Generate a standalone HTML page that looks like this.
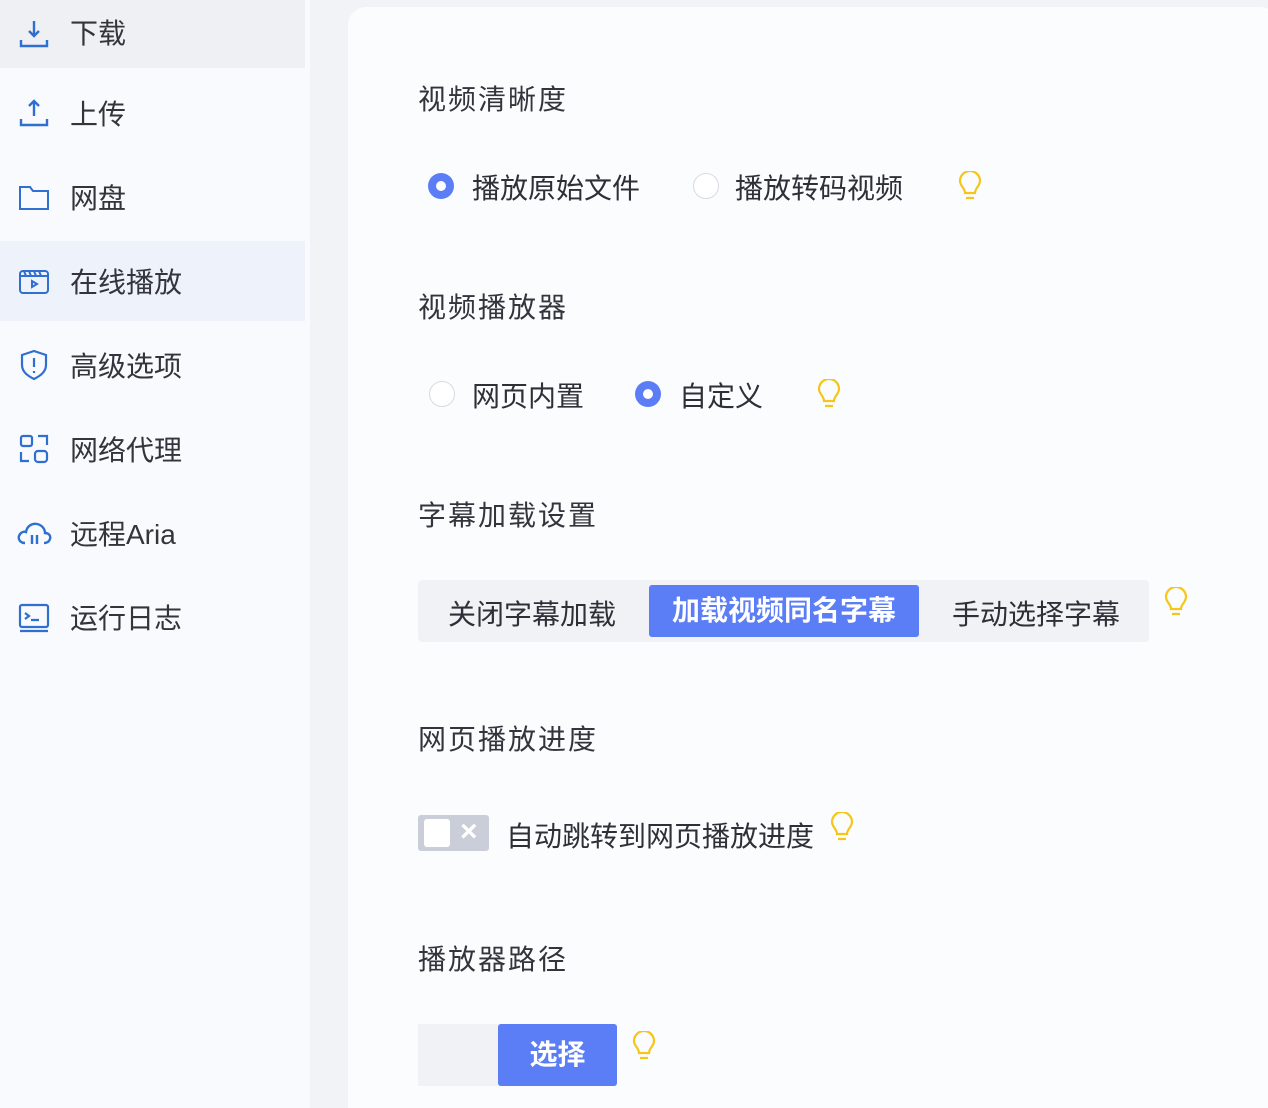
<!DOCTYPE html>
<html><head><meta charset="utf-8"><style>
*{margin:0;padding:0;box-sizing:border-box}
html,body{width:1268px;height:1108px;overflow:hidden}
body{background:#f1f3f7;font-family:"Liberation Sans","Noto Sans CJK SC",sans-serif;color:#2e3038;position:relative}
.side{position:absolute;left:0;top:0;width:310px;height:1108px;background:#f9fafd}
.item{position:absolute;left:0;width:305px;height:80px;display:flex;align-items:center;font-size:28px;color:#33343c}
.item svg{position:absolute;left:16px;width:36px;height:36px}
.item span{position:absolute;left:70px}
.card{position:absolute;left:348px;top:7px;width:930px;height:1101px;background:#fbfcfe;border-radius:18px 18px 0 0}
.t{position:absolute;left:418px;font-size:28px;letter-spacing:2px;color:#33343c}
.r{position:absolute;font-size:28px;color:#2e3038}
.rad{position:absolute;width:26px;height:26px;border-radius:50%;border:1.5px solid #d8dbe2;background:#fff}
.rad.on{background:#5b7df5;border:none}
.rad.on:after{content:"";position:absolute;left:8px;top:8px;width:10px;height:10px;border-radius:50%;background:#fff}
.bulb{position:absolute;width:24px;height:32px}
</style></head><body>
<div class="side">
<div class="item" style="top:0;height:68px;background:#eff0f4"><svg viewBox="0 0 36 36" fill="none" stroke="#2f6fd1" stroke-width="2.4"><path d="M18 5v15M13 15l5 5 5-5M5 24v6h26v-6"/></svg><span style="top:12px">下载</span></div>
<div class="item" style="top:73px"><svg viewBox="0 0 36 36" fill="none" stroke="#2f6fd1" stroke-width="2.4"><path d="M18 21V6M13 11l5-5 5 5M5 24v6h26v-6"/></svg><span>上传</span></div>
<div class="item" style="top:157px"><svg viewBox="0 0 36 36" fill="none" stroke="#2f6fd1" stroke-width="2"><path d="M4 8h10l3 4h15v18H4z"/></svg><span>网盘</span></div>
<div class="item" style="top:241px;background:#eef2fa"><svg viewBox="0 0 36 36" fill="none" stroke="#2f6fd1" stroke-width="2"><rect x="4" y="8" width="28" height="22" rx="3"/><path d="M4 13h28M8 8l2 5M13 8l2 5M18 8l2 5M23 8l2 5M16 18v6l5-3z"/></svg><span>在线播放</span></div>
<div class="item" style="top:325px"><svg viewBox="0 0 36 36" fill="none" stroke="#2f6fd1" stroke-width="2.2"><path d="M18 4l12 4v10c0 7-6 11-12 14C12 29 6 25 6 18V8z"/><path d="M18 11v9M18 24v2"/></svg><span>高级选项</span></div>
<div class="item" style="top:409px"><svg viewBox="0 0 36 36" fill="none" stroke="#2f6fd1" stroke-width="2.2"><rect x="5" y="5" width="11" height="10" rx="2"/><path d="M22 5h9v9M5 21v9h8"/><rect x="19" y="20" width="12" height="11" rx="3"/></svg><span>网络代理</span></div>
<div class="item" style="top:493px"><svg viewBox="0 0 36 36" fill="none" stroke="#2f6fd1" stroke-width="2.4"><path d="M9 28C4 28 2 24 3 21s4-5 7-4c1-6 6-9 11-8s8 5 8 9c4 0 6 3 5 6s-3 4-6 4"/><path d="M16 20v9M21 20v9"/></svg><span>远程Aria</span></div>
<div class="item" style="top:577px"><svg viewBox="0 0 36 36" fill="none" stroke="#2f6fd1" stroke-width="2.2"><rect x="4" y="6" width="28" height="22" rx="2"/><path d="M9 14l4 3-4 3M15 21h8M4 32h28"/></svg><span>运行日志</span></div>
</div>
<div class="card"></div>

<div class="t" style="top:78px">视频清晰度</div>
<div class="rad on" style="left:428px;top:173px"></div>
<div class="r" style="left:472px;top:167px">播放原始文件</div>
<div class="rad" style="left:693px;top:173px"></div>
<div class="r" style="left:735px;top:167px">播放转码视频</div>
<svg class="bulb" style="left:958px;top:171px" viewBox="0 0 24 32" fill="none" stroke="#f5c518" stroke-width="2.2"><path d="M7 22c0-5-5-7-5-12a10 10 0 0 1 20 0c0 5-5 7-5 12zM8 27h8"/></svg>

<div class="t" style="top:286px">视频播放器</div>
<div class="rad" style="left:429px;top:381px"></div>
<div class="r" style="left:472px;top:375px">网页内置</div>
<div class="rad on" style="left:635px;top:381px"></div>
<div class="r" style="left:679px;top:375px">自定义</div>
<svg class="bulb" style="left:817px;top:379px" viewBox="0 0 24 32" fill="none" stroke="#f5c518" stroke-width="2.2"><path d="M7 22c0-5-5-7-5-12a10 10 0 0 1 20 0c0 5-5 7-5 12zM8 27h8"/></svg>

<div class="t" style="top:494px">字幕加载设置</div>
<div style="position:absolute;left:418px;top:580px;width:731px;height:62px;background:#f1f2f6;border-radius:4px"></div>
<div class="r" style="left:448px;top:593px">关闭字幕加载</div>
<div style="position:absolute;left:649px;top:585px;width:270px;height:52px;background:#5b7df5;border-radius:3px;color:#fff;font-size:28px;font-weight:bold;text-align:center;line-height:52px">加载视频同名字幕</div>
<div class="r" style="left:952px;top:593px">手动选择字幕</div>
<svg class="bulb" style="left:1164px;top:587px" viewBox="0 0 24 32" fill="none" stroke="#f5c518" stroke-width="2.2"><path d="M7 22c0-5-5-7-5-12a10 10 0 0 1 20 0c0 5-5 7-5 12zM8 27h8"/></svg>

<div class="t" style="top:718px">网页播放进度</div>
<div style="position:absolute;left:418px;top:815px;width:71px;height:36px;background:#c9ced8;border-radius:3px"></div>
<div style="position:absolute;left:424px;top:819px;width:26px;height:28px;background:#fff;border-radius:3px"></div>
<div style="position:absolute;left:460px;top:815px;color:#fff;font-size:30px;font-weight:bold">×</div>
<div class="r" style="left:506px;top:815px">自动跳转到网页播放进度</div>
<svg class="bulb" style="left:830px;top:812px" viewBox="0 0 24 32" fill="none" stroke="#f5c518" stroke-width="2.2"><path d="M7 22c0-5-5-7-5-12a10 10 0 0 1 20 0c0 5-5 7-5 12zM8 27h8"/></svg>

<div class="t" style="top:938px">播放器路径</div>
<div style="position:absolute;left:418px;top:1024px;width:82px;height:62px;background:#f1f2f6"></div>
<div style="position:absolute;left:498px;top:1024px;width:119px;height:62px;background:#5b7df5;border-radius:3px;color:#fff;font-size:28px;font-weight:bold;text-align:center;line-height:62px">选择</div>
<svg class="bulb" style="left:632px;top:1031px" viewBox="0 0 24 32" fill="none" stroke="#f5c518" stroke-width="2.2"><path d="M7 22c0-5-5-7-5-12a10 10 0 0 1 20 0c0 5-5 7-5 12zM8 27h8"/></svg>
</body></html>
